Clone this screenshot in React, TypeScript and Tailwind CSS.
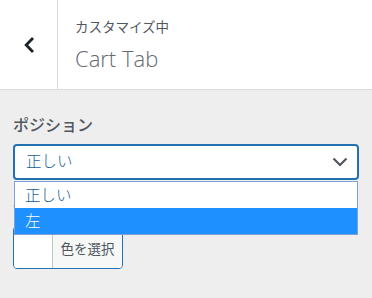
export default function App() {
  return (
    <div
      className="relative h-[298px] w-[372px] overflow-hidden bg-[#eeeeee]"
      style={{ fontFamily: '"Noto Sans", "Noto Sans CJK JP", sans-serif' }}
    >
      <header className="flex h-[90px] border-b border-[#dcdcde] bg-white">
        <button className="flex w-[58px] items-center justify-center border-r border-[#dcdcde] bg-white pl-[2px]">
          <svg width="13" height="18" viewBox="0 0 13 18" aria-hidden="true">
            <path d="M10 2 L3.2 9 L10 16" fill="none" stroke="#1d2327" strokeWidth="2.8" />
          </svg>
        </button>
        <div className="pl-[17px] pt-[17px]">
          <p className="text-[13.5px] leading-[20px] text-[#50575e]">カスタマイズ中</p>
          <h1
            className="mt-[6px] text-[22px] font-light leading-[30px] text-[#646970]"
            style={{ fontFamily: '"Open Sans", "Noto Sans", sans-serif' }}
          >
            Cart Tab
          </h1>
        </div>
      </header>

      <div className="px-[13px] pt-[23px]">
        <label className="block text-[16px] font-medium leading-[24px] text-[#50575e]">ポジション</label>

        <div className="relative mt-[7px] w-[346px]">
          <div className="flex h-[36px] items-center justify-between rounded-[4px] border-2 border-[#2271b1] bg-white pl-[11px] pr-[9px]">
            <span className="text-[15.5px] font-light text-[#135e96]">正しい</span>
            <svg width="16" height="10" viewBox="0 0 16 10" aria-hidden="true">
              <path d="M1.5 1.5 L8 8 L14.5 1.5" fill="none" stroke="#50575e" strokeWidth="2.2" />
            </svg>
          </div>

          <ul className="absolute left-[1px] top-[37px] z-10 w-[344px] border border-[#7f9fd6] bg-white text-[15.5px] font-light leading-[26px]">
            <li className="pl-[10px] text-[#135e96]">正しい</li>
            <li className="bg-[#1e90ff] pl-[10px] text-white">左</li>
          </ul>
        </div>

        <p className="mt-[18px] text-[14px] leading-[20px] text-[#50575e]">色</p>

        <div className="mt-[8px] flex h-[43px] w-[110px] overflow-hidden rounded-[4px] border border-[#2271b1]">
          <span className="w-[39px] border-r border-[#c3c4c7] bg-white" />
          <span className="flex flex-1 items-center justify-center bg-[#f6f7f7] pt-[4px] text-[13.5px] text-[#50575e]">
            色を選択
          </span>
        </div>
      </div>
    </div>
  );
}
